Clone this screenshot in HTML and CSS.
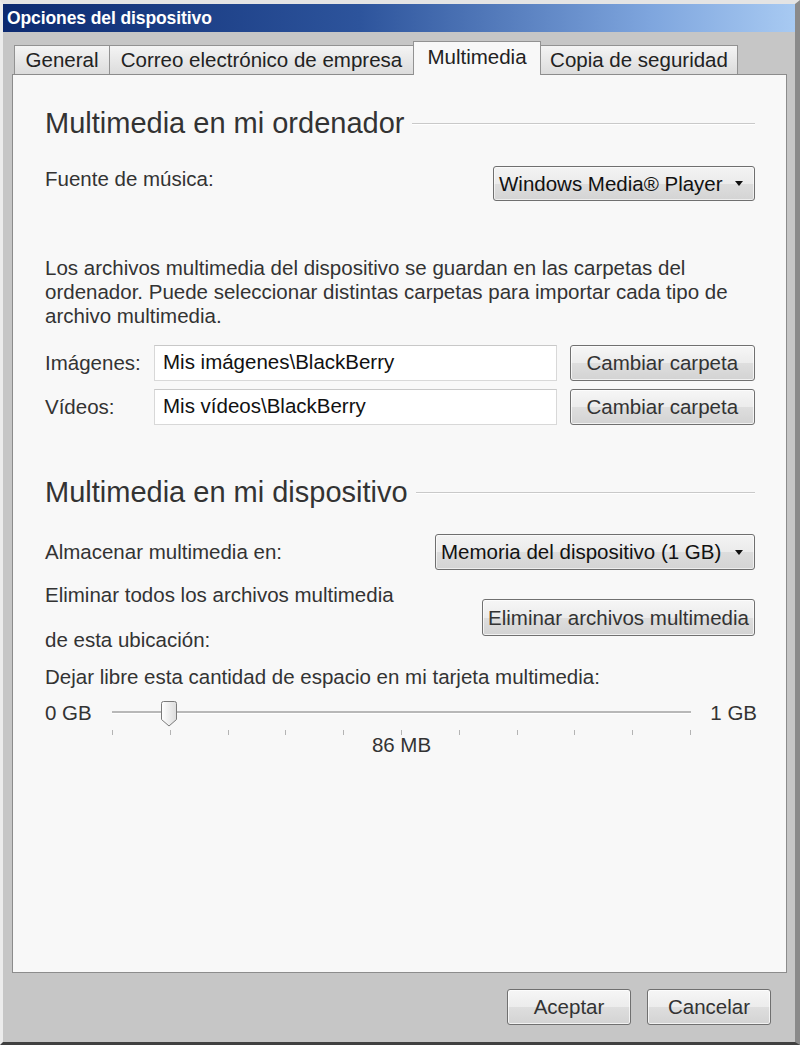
FILE: index.html
```html
<!DOCTYPE html>
<html lang="es">
<head>
<meta charset="utf-8">
<title>Opciones del dispositivo</title>
<link rel="stylesheet" href="styles.css">
</head>
<body>
<div class="window">
  <div class="titlebar">Opciones del dispositivo</div>
  <div class="client">
    <div class="tabs">
      <div class="tab t-general">General</div>
      <div class="tab t-correo">Correo electrónico de empresa</div>
      <div class="tab t-multi active">Multimedia</div>
      <div class="tab t-copia">Copia de seguridad</div>
    </div>
    <div class="panel">
      <div class="heading">Multimedia en mi ordenador</div>

      <div class="row r-fuente">
        <span class="label">Fuente de música:</span>
        <div class="combo c-music">Windows Media® Player<span class="arrow"></span></div>
      </div>

      <p class="para">Los archivos multimedia del dispositivo se guardan en las carpetas del<br>ordenador. Puede seleccionar distintas carpetas para importar cada tipo de<br>archivo multimedia.</p>

      <div class="folders">
        <div class="folder-row">
          <span class="flabel">Imágenes:</span>
          <div class="input">Mis imágenes\BlackBerry</div>
          <div class="btn b-folder">Cambiar carpeta</div>
        </div>
        <div class="folder-row">
          <span class="flabel">Vídeos:</span>
          <div class="input">Mis vídeos\BlackBerry</div>
          <div class="btn b-folder">Cambiar carpeta</div>
        </div>
      </div>

      <div class="heading h2">Multimedia en mi dispositivo</div>

      <div class="row r-store">
        <span class="label">Almacenar multimedia en:</span>
        <div class="combo c-store">Memoria del dispositivo (1 GB)<span class="arrow"></span></div>
      </div>

      <div class="row r-delete">
        <div class="del-text">
          <span>Eliminar todos los archivos multimedia</span>
          <span>de esta ubicación:</span>
        </div>
        <div class="btn b-delete">Eliminar archivos multimedia</div>
      </div>

      <div class="free-text">Dejar libre esta cantidad de espacio en mi tarjeta multimedia:</div>

      <div class="slider">
        <span class="s-min">0 GB</span>
        <div class="s-track-area">
          <div class="s-track"></div>
          <svg class="s-thumb" width="16" height="26" viewBox="0 0 16 26">
            <defs>
              <linearGradient id="tg" x1="0" y1="0" x2="1" y2="0">
                <stop offset="0" stop-color="#ffffff"/>
                <stop offset="1" stop-color="#dcdcdc"/>
              </linearGradient>
            </defs>
            <path d="M2.5 0.5 H13.5 Q15.5 0.5 15.5 2.5 V18.5 L8 25 L0.5 18.5 V2.5 Q0.5 0.5 2.5 0.5 Z" fill="url(#tg)" stroke="#7a7a7a" stroke-width="1"/>
          </svg>
          <div class="s-ticks">
            <i></i><i></i><i></i><i></i><i></i><i></i><i></i><i></i><i></i><i></i><i></i>
          </div>
          <div class="s-value">86 MB</div>
        </div>
        <span class="s-max">1 GB</span>
      </div>
    </div>
    <div class="footer">
      <div class="btn b-foot">Aceptar</div>
      <div class="btn b-foot">Cancelar</div>
    </div>
  </div>
</div>
</body>
</html>
```

FILE: styles.css
```css
* { box-sizing: border-box; }

html, body {
  margin: 0;
  padding: 0;
}

body {
  width: 800px;
  height: 1045px;
  overflow: hidden;
  font-family: "Liberation Sans", Arial, sans-serif;
  font-size: 20.5px;
  color: #333;
  background: #c6c6c6;
}

.window {
  width: 800px;
  height: 1045px;
  background: #c6c6c6;
  border-top: 4px solid #e4e4e4;
  border-left: 3px solid #ececec;
  border-right: 5px solid #8a8a8a;
  border-bottom: 3px solid #404040;
  display: flex;
  flex-direction: column;
}

.titlebar {
  height: 28px;
  flex: none;
  background: linear-gradient(to right, #0c2a70 0%, #2d549c 45%, #7fa6de 82%, #a8caf2 100%);
  color: #fff;
  font-weight: bold;
  font-size: 17.5px;
  line-height: 28px;
  padding-left: 4px;
  letter-spacing: -0.1px;
}

.client {
  flex: 1;
  display: flex;
  flex-direction: column;
  padding-left: 9px;
}

.tabs {
  display: flex;
  align-items: flex-end;
  height: 42px;
  padding-left: 2px;
  position: relative;
  z-index: 2;
}

.tab {
  height: 29px;
  border: 1px solid #929292;
  border-bottom: none;
  border-left: none;
  background: linear-gradient(#f4f4f4, #dcdcdc);
  color: #222;
  line-height: 28px;
  text-align: center;
  white-space: nowrap;
}

.t-general { width: 96px; border-left: 1px solid #929292; }
.t-correo { width: 304px; }
.t-multi { width: 127px; }
.t-copia { width: 197px; }

.tab.active {
  height: 34px;
  margin-bottom: -1px;
  background: #f8f8f8;
  border-left: 1px solid #929292;
  margin-left: -1px;
  width: 128px;
  line-height: 30px;
}

.panel {
  width: 775px;
  height: 899px;
  border: 1px solid #8c8c8c;
  background: #f8f8f8;
  padding: 28px 31px 0 32px;
  display: flex;
  flex-direction: column;
  position: relative;
  z-index: 1;
}

.heading {
  height: 40px;
  display: flex;
  align-items: center;
  gap: 8px;
  font-size: 29px;
  color: #333;
  white-space: nowrap;
}

.heading::after {
  content: "";
  flex: 1;
  height: 1px;
  background: #c9c9c9;
  box-shadow: 0 1px 0 #ffffff;
  margin-top: 0;
}

.row {
  display: flex;
  align-items: center;
  justify-content: space-between;
}

.r-fuente {
  margin-top: 23px;
  height: 35px;
}

.r-fuente .label { margin-top: -10px; }

.combo {
  height: 35px;
  border: 1px solid #6f6f6f;
  border-radius: 3px;
  background: linear-gradient(#f3f3f3 0%, #ebebeb 50%, #dddddd 51%, #d4d4d4 100%);
  color: #111;
  display: flex;
  align-items: center;
  padding-left: 5px;
  padding-right: 11px;
  white-space: nowrap;
  box-shadow: inset 0 0 0 1px rgba(255,255,255,0.6);
}

.c-music { width: 262px; }
.c-store { width: 320px; height: 36px; }

.arrow {
  margin-left: auto;
  width: 0;
  height: 0;
  border-left: 4px solid transparent;
  border-right: 4px solid transparent;
  border-top: 5px solid #111;
}

.para {
  margin: 55px 0 0 0;
  line-height: 24px;
  white-space: nowrap;
}

.folders {
  margin-top: 17px;
  display: flex;
  flex-direction: column;
  gap: 8px;
}

.folder-row {
  display: flex;
  align-items: center;
  height: 36px;
}

.flabel {
  width: 109px;
  flex: none;
}

.input {
  width: 404px;
  height: 36px;
  background: #fff;
  border: 1px solid #d8d8d8;
  border-top-color: #c8c8c8;
  padding-left: 8px;
  line-height: 31px;
  color: #111;
}

.btn {
  border: 1px solid #707070;
  border-radius: 3px;
  background: linear-gradient(#f6f6f6 0%, #ececec 50%, #dedede 51%, #d3d3d3 100%);
  box-shadow: inset 0 0 0 1px rgba(255,255,255,0.7);
  color: #333;
  display: flex;
  align-items: center;
  justify-content: center;
  white-space: nowrap;
}

.b-folder {
  width: 186px;
  height: 36px;
  margin-left: 13px;
}

.h2 {
  margin-top: 47px;
}

.r-store {
  margin-top: 22px;
  height: 36px;
}

.r-delete {
  margin-top: 13px;
  height: 69px;
}

.del-text {
  display: flex;
  flex-direction: column;
  gap: 21px;
  line-height: 24px;
}

.b-delete {
  width: 273px;
  height: 37px;
}

.free-text {
  margin-top: 13px;
  line-height: 24px;
  white-space: nowrap;
}

.slider {
  display: flex;
  height: 80px;
}

.s-min {
  width: 67px;
  flex: none;
  line-height: 48px;
}

.s-max {
  width: 66px;
  flex: none;
  text-align: right;
  line-height: 48px;
}

.s-track-area {
  width: 579px;
  flex: none;
  position: relative;
}

.s-track {
  margin-top: 22px;
  height: 2px;
  background: #b8b8b8;
  border-bottom: 1px solid #ffffff;
  box-sizing: content-box;
}

.s-thumb {
  position: absolute;
  left: 49px;
  top: 12px;
}

.s-ticks {
  margin-top: 16px;
  display: flex;
  justify-content: space-between;
  height: 5px;
}

.s-ticks i {
  width: 1px;
  height: 5px;
  background: #b4b4b4;
}

.s-value {
  text-align: center;
  line-height: 24px;
  margin-top: -2px;
}

.footer {
  display: flex;
  justify-content: flex-end;
  gap: 16px;
  margin-top: 16px;
  padding-right: 24px;
}

.b-foot {
  width: 124px;
  height: 36px;
}
```
